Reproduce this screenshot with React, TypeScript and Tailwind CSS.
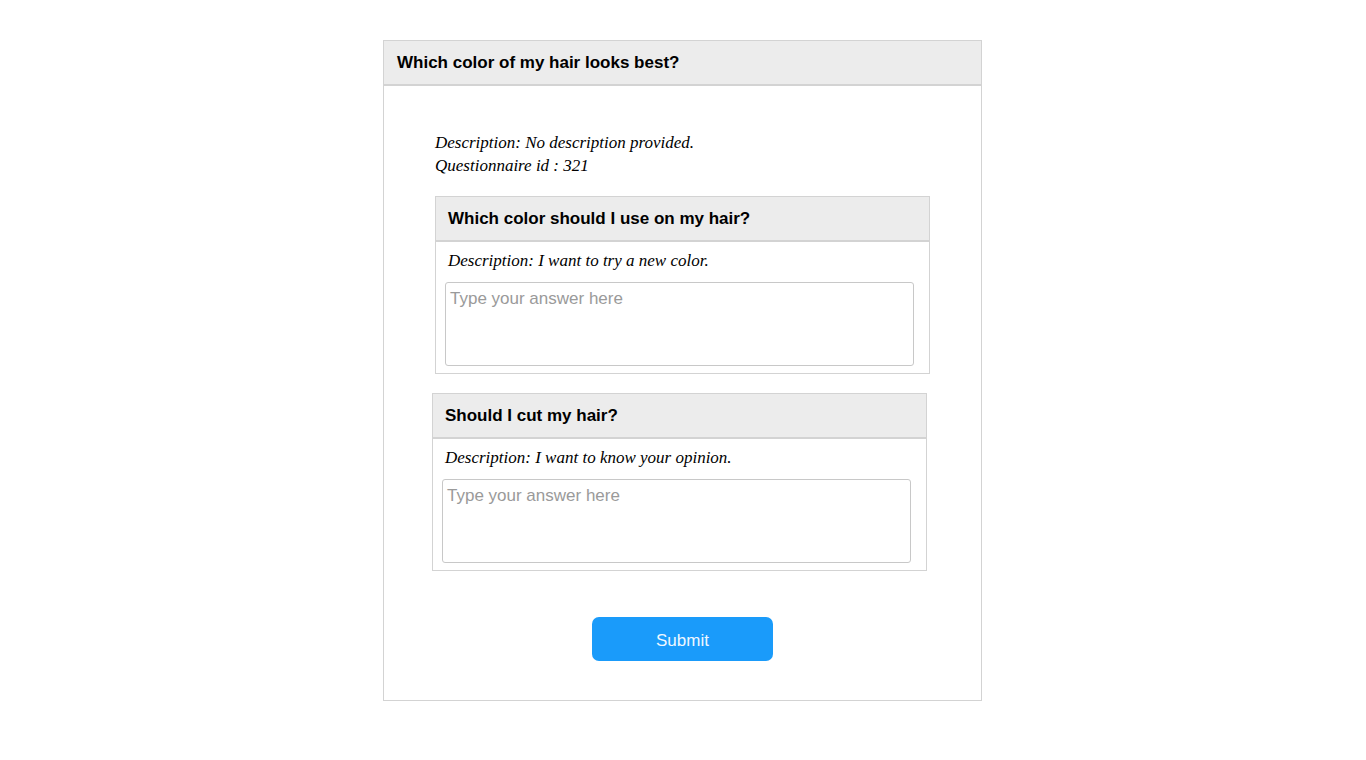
import React from "react";

const sans = { fontFamily: '"Liberation Sans", Arial, sans-serif' };
const script = { fontFamily: '"Liberation Serif", "DejaVu Serif", serif' };

function Question({ title, desc, shift }: { title: string; desc: string; shift?: boolean }) {
  return (
    <div className={`w-[495px] border border-[#d3d3d3] bg-white ${shift ? "-ml-[3px]" : ""}`}>
      <div className="h-[45px] bg-[#ececec] border-b-2 border-[#d3d3d3] flex items-center pl-[12px]">
        <span className="text-[17px] font-bold text-black" style={sans}>{title}</span>
      </div>
      <div className="pl-[9px] pr-[15px] pb-[7px]">
        <div className="pl-[3px] pt-[7px] h-[40px] text-[17px] italic text-black leading-[24px]" style={script}>
          {desc}
        </div>
        <textarea
          className="block w-[469px] h-[84px] border border-[#c8c8c8] rounded-[3px] px-[4px] pt-[3px] pb-[4px] text-[17px] text-black placeholder:text-[#9a9a9a] resize-none outline-none"
          style={sans}
          placeholder="Type your answer here"
        />
      </div>
    </div>
  );
}

export default function App() {
  return (
    <div className="min-h-[760px] bg-white pt-[40px] pr-[1px]">
      <div className="mx-auto w-[599px] h-[661px] border border-[#d3d3d3] bg-white flex flex-col">
        <div className="h-[45px] bg-[#ececec] border-b-2 border-[#d3d3d3] flex items-center pl-[13px]">
          <span className="text-[17px] font-bold text-black" style={sans}>Which color of my hair looks best?</span>
        </div>
        <div className="pl-[51px] pt-[45px]">
          <div className="text-[17px] italic text-black leading-[23px]" style={script}>
            <div>Description: No description provided.</div>
            <div>Questionnaire id : 321</div>
          </div>
          <div className="mt-[19px] flex flex-col gap-[19px]">
            <Question title="Which color should I use on my hair?" desc="Description: I want to try a new color." />
            <Question title="Should I cut my hair?" desc="Description: I want to know your opinion." shift />
          </div>
        </div>
        <div className="mt-[46px] flex justify-center">
          <button
            className="w-[181px] h-[44px] pt-[4px] rounded-[7px] bg-[#1a9bfa] text-[#eef7ff] text-[17px] font-light"
            style={sans}
          >
            Submit
          </button>
        </div>
      </div>
    </div>
  );
}
